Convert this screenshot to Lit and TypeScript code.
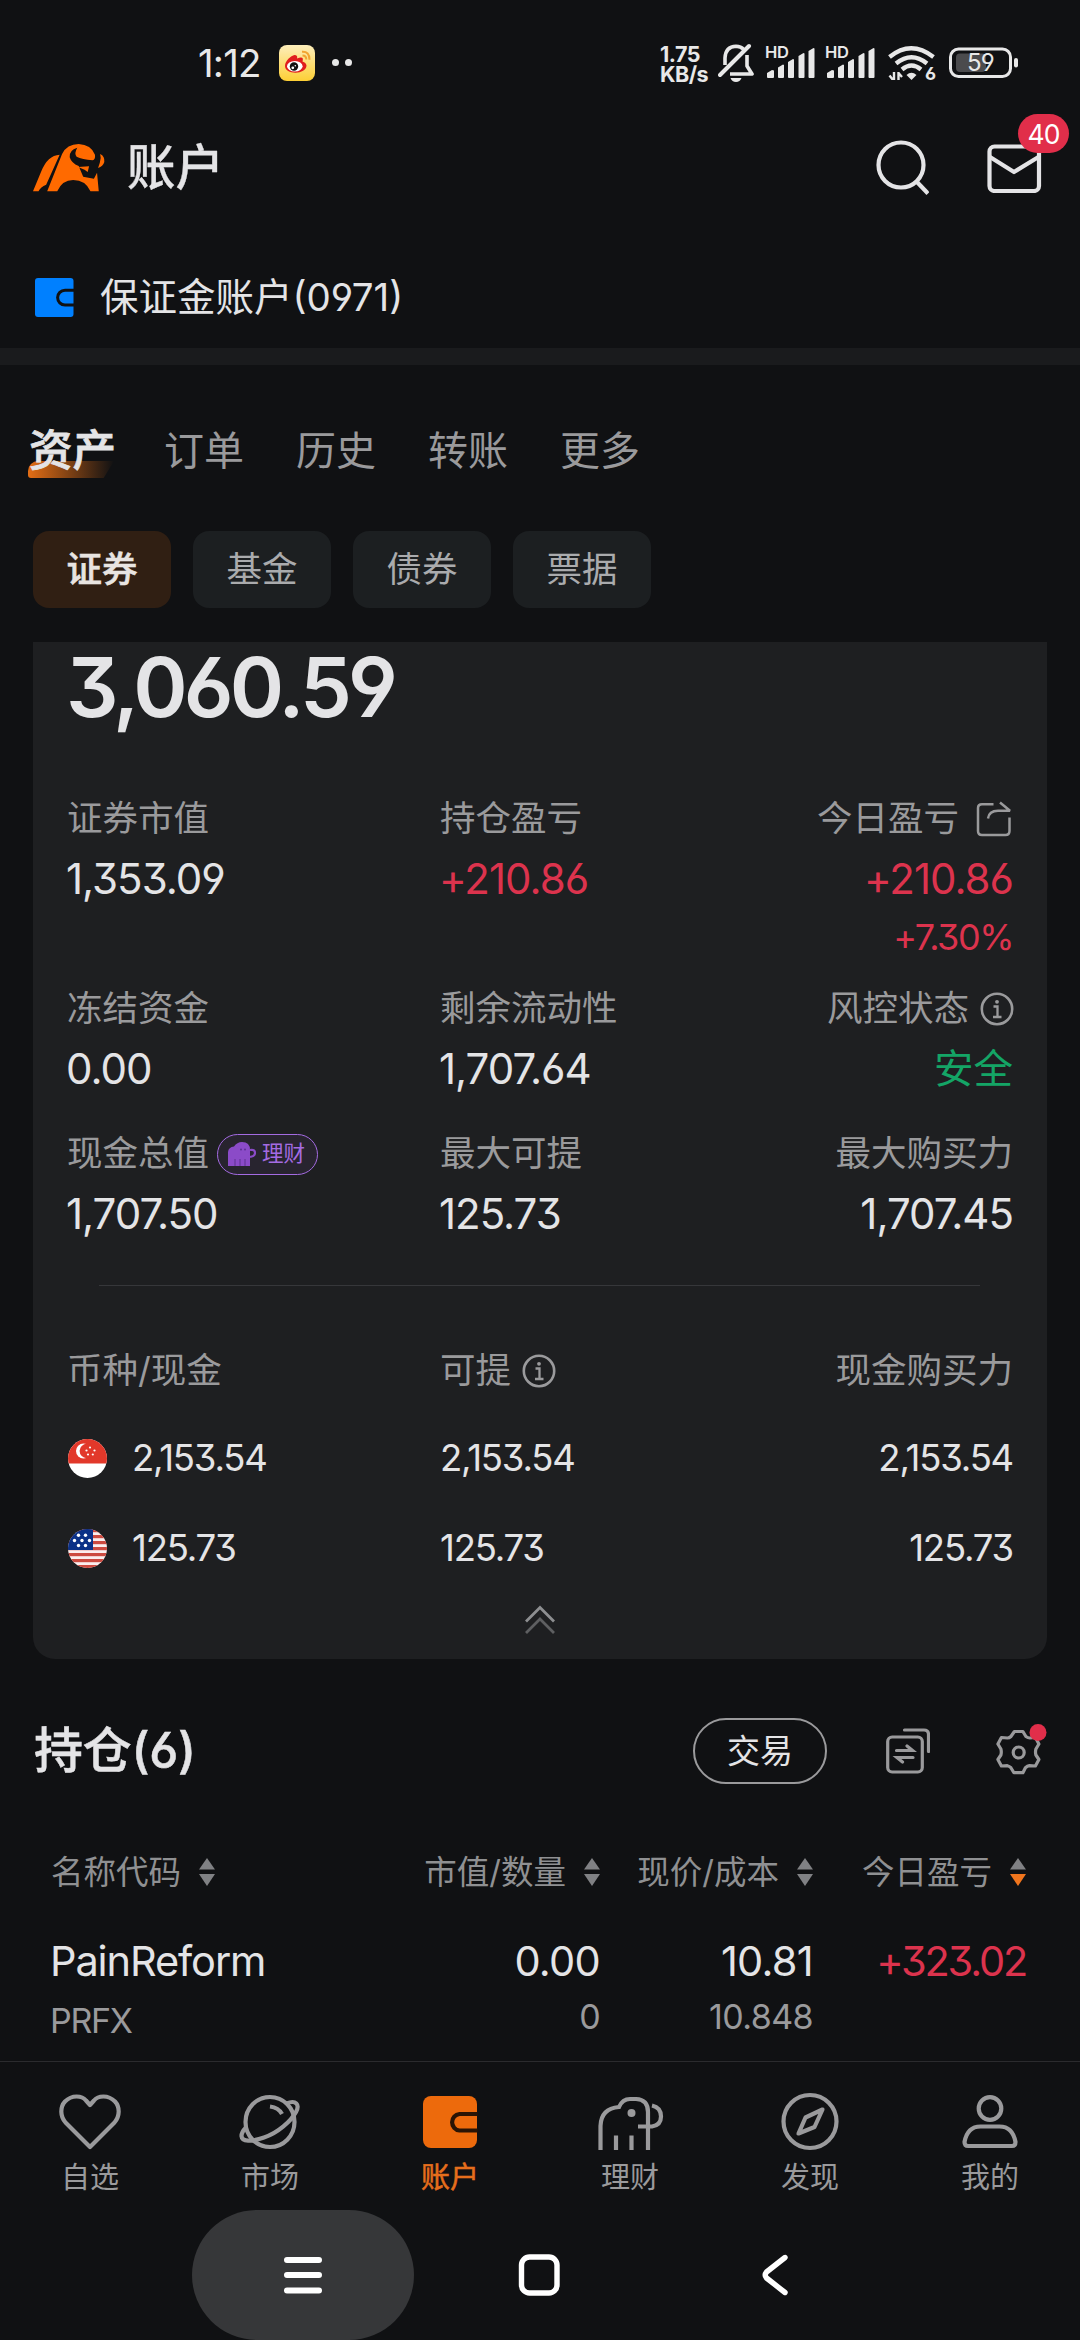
import { LitElement, html, css, svg } from "lit";
import { customElement, property } from "lit/decorators.js";
import { classMap } from "lit/directives/class-map.js";

const infoIcon = html`<svg class="info" viewBox="0 0 34 34" width="34" height="34" fill="none" stroke="#9a9a9c" stroke-width="2.6">
  <circle cx="17" cy="17" r="15.2" /><path d="M13.5 14.5h4v10M13 25h8.5" stroke-width="2.3" /><circle cx="17" cy="9.8" r="1.9" fill="#9a9a9c" stroke="none" />
</svg>`;

@customElement("sort-arrows")
export class SortArrows extends LitElement {
  @property({ type: Boolean }) down = false;
  static styles = css`
    :host { display: block; width: 16px; height: 28px; }
    svg { display: block; }
  `;
  render() {
    return html`<svg viewBox="0 0 16 28" width="16" height="28">
      <path d="M8 0l8 11.5H0z" fill="#808184" /><path d="M8 28L0 16h16z" fill=${this.down ? "#f0751d" : "#808184"} />
    </svg>`;
  }
}

@customElement("status-bar")
export class StatusBar extends LitElement {
  static styles = css`
    :host { display: flex; height: 90px; padding: 35px 62px 0 199px; box-sizing: border-box; align-items: flex-start; color: #e8e8e8; }
    .row { display: flex; flex: 1; height: 55px; align-items: center; }
    .time { font-size: 38.5px; line-height: 40px; letter-spacing: -0.8px; width: 80px; white-space: nowrap; margin-left: -1px; margin-right: 1px; }
    .dots { margin-left: 17px; display: flex; gap: 6px; }
    .dots i { width: 7px; height: 7px; border-radius: 50%; background: #e8e8e8; }
    .space { flex: 1; }
    .speed { width: 58px; display: flex; flex-direction: column; font-size: 21.5px; line-height: 20px; font-weight: 700; letter-spacing: -0.5px; margin-top: 2px; }
    .bell { margin-right: 11px; }
    .sig { width: 50px; height: 38px; margin-right: 10px; display: grid; }
    .sig > * { grid-area: 1 / 1; }
    .hd { font-size: 16.5px; line-height: 17px; font-weight: 600; margin-top: 0; letter-spacing: -0.4px; }
    .wifi { display: grid; width: 50px; margin-left: 3px; }
    .wifi > * { grid-area: 1 / 1; }
    .six { font-size: 18px; font-weight: 700; line-height: 18px; align-self: end; justify-self: end; margin-right: 2px; margin-bottom: -3px; }
    .bat { display: grid; width: 69px; height: 31px; margin-left: 11px; }
    .bat > * { grid-area: 1 / 1; }
    .pct { font-size: 24px; line-height: 31px; width: 63px; text-align: center; letter-spacing: -0.8px; }
    svg { display: block; flex: none; }
  `;
  private signal() {
    return html`<div class="sig">
      <span class="hd">HD</span>
      <svg viewBox="0 0 50 38" width="50" height="38" fill="#e8e8e8">
        <path d="M2 29l5-3 2 .5V33q0 1-1 1H3q-1 0-1-1zM13 23.500l5-3 1 .5V33q0 1-1 1h-4q-1 0-1-1zM23 18l5-3 1 .5V33q0 1-1 1h-4q-1 0-1-1zM33.500 12l5-3 1 .5V33q0 1-1 1h-4q-1 0-1-1zM43.500 7l5-3 1 .5V33q0 1-1 1h-4q-1 0-1-1z" />
      </svg>
    </div>`;
  }
  render() {
    return html`<div class="row">
      <span class="time">1:12</span>
      <svg viewBox="0 0 36 36" width="36" height="36">
        <defs><linearGradient id="wb" x1="0" y1="0" x2="0" y2="1"><stop offset="0" stop-color="#fdeebb" /><stop offset="1" stop-color="#fdcf35" /></linearGradient></defs>
        <rect width="36" height="36" rx="8" fill="url(#wb)" />
        <path d="M23 6.800q7.500-.5 7.500 8M23.500 10.500q3.800 0 3.800 4" fill="none" stroke="#f2a531" stroke-width="2" />
        <path d="M6 21C6 16 12 10.500 15.500 10q3.500 0 2.500 3.500Q23 11.500 23.800 13.500 24 15 23.500 16.500 27 17.500 27.500 20.500C27.500 25 22 27.700 16.500 27.700S6 25.500 6 21z" fill="#e01d1d" />
        <ellipse cx="15.800" cy="21.200" rx="7.800" ry="5.300" fill="#fff" />
        <circle cx="15" cy="21.500" r="4.200" fill="#111" /><circle cx="13.800" cy="22.800" r="1.400" fill="#fff" /><circle cx="16.300" cy="20.700" r=".8" fill="#fff" />
      </svg>
      <span class="dots"><i></i><i></i></span>
      <span class="space"></span>
      <div class="speed"><span>1.75</span><span>KB/s</span></div>
      <svg class="bell" viewBox="0 0 36 40" width="36" height="40" fill="none" stroke="#e8e8e8" stroke-width="3.600">
        <path d="M7 22V15Q7.500 3.500 18 3.200q5 .2 7.500 3" /><path d="M29 12v11l5 8H12" stroke-linejoin="round" /><path d="M2 32L31 3" stroke-linecap="round" stroke-width="4" /><path d="M12.500 35h11q-1.500 4-5.500 4t-5.500-4z" fill="#e8e8e8" stroke="none" />
      </svg>
      ${this.signal()}${this.signal()}
      <div class="wifi">
        <svg viewBox="0 0 50 34" width="50" height="34" fill="none" stroke="#e8e8e8" stroke-width="4.300">
          <path d="M1.500 11Q23 -6.500 45.500 11" /><path d="M8 17.500Q23.500 5 39 17.500" /><path d="M14 23.500q9.500-8 19 0" />
          <path d="M18.500 29q5-4.500 10 0l-5 5z" fill="#e8e8e8" stroke="none" />
          <path d="M6 26v9M1.500 29.500L5 34M10.500 35v-9M10.500 27l3.500 4" stroke-width="2.400" />
        </svg>
        <span class="six">6</span>
      </div>
      <div class="bat">
        <svg viewBox="0 0 69 31" width="69" height="31"><rect x="1.500" y="2" width="60" height="27.500" rx="8" fill="none" stroke="#e8e8e8" stroke-width="3" /><rect x="7" y="6.500" width="30" height="18.500" rx="4" fill="#4b4b4d" /><rect x="65" y="11" width="4" height="9.500" rx="2" fill="#e8e8e8" /></svg>
        <span class="pct">59</span>
      </div>
    </div>`;
  }
}

@customElement("app-header")
export class AppHeader extends LitElement {
  static styles = css`
    :host { display: block; color: #e4e4e6; }
    .top { display: flex; align-items: center; height: 156px; padding: 0 38px 0 33px; }
    h1 { margin: 0 0 0 22px; font-size: 48.5px; font-weight: 500; line-height: 60px; flex: 1; -webkit-text-stroke: 0.3px; }
    .search { margin-right: 57px; }
    .mail { position: relative; }
    .badge { position: absolute; left: 32px; top: -29px; width: 51px; height: 39px; border-radius: 20px; background: #e12e4a; color: #fff; font-size: 26.5px; line-height: 40px; text-align: center; letter-spacing: -1px; }
    .account { display: flex; align-items: center; height: 102px; padding-left: 35px; gap: 26px; font-size: 38.5px; border-bottom: 17px solid #1a1b1d; }
    .account b { font-weight: 400; white-space: nowrap; line-height: 50px; }
    svg { display: block; }
  `;
  render() {
    return html`
      <div class="top">
        <svg viewBox="96 368 208 144" width="72" height="48" preserveAspectRatio="none" fill="#ff6a00">
          <path d="M96 510L120 450Q138 402 173 400L134 490Q118 496 112 510z" />
          <path d="M137 510L180 398Q194 368 228 368Q264 370 275 400Q277 414 268 417Q238 414 222 406Q214 396 224 379Q200 386 202 408Q207 426 228 434L241 466L272 472L281 454L286 510H262Q248 476 212 476Q180 476 166 510z" />
          <path d="M226 437L258 435L254 452L245 445z" />
          <path d="M290 398Q304 405 302 422Q298 436 284 440L289 424Q294 412 290 398z" />
        </svg>
        <h1>账户</h1>
        <svg class="search" viewBox="0 0 54 56" width="54" height="56" fill="none" stroke="#e4e4e6" stroke-width="4.200"><circle cx="26" cy="25" r="22.500" /><path d="M41.500 41.500L53 53.500" /></svg>
        <div class="mail">
          <svg viewBox="0 0 56 50" width="56" height="50" fill="none" stroke="#e4e4e6" stroke-width="4.200"><rect x="3.500" y="3.500" width="49.500" height="44.500" rx="5" /><path d="M4 14l24 15L52.500 14" stroke-linejoin="round" /></svg>
          <span class="badge">40</span>
        </div>
      </div>
      <div class="account">
        <svg viewBox="0 0 39 39" width="39" height="39"><rect width="38.500" height="39" rx="3" fill="#0080ff" /><path d="M39 12.200H30a7.300 7.300 0 0 0 0 14.800h9" fill="none" stroke="#101113" stroke-width="3" /></svg>
        <b>保证金账户(0971)</b>
      </div>`;
  }
}

@customElement("asset-tabs")
export class AssetTabs extends LitElement {
  static styles = css`
    :host { display: block; }
    .tabs { display: flex; height: 172px; padding-left: 28px; align-items: center; color: #9a9a9c; }
    .tab { font-size: 40px; line-height: 50px; width: 132px; }
    .tab.on { width: 136px; font-size: 43.500px; font-weight: 500; color: #e4e4e6; position: relative; margin-top: -2px; }
    .tab.on::before { content: ""; position: absolute; left: 0; top: 36px; width: 86px; height: 17px; border-radius: 10px 0 0 3px; background: linear-gradient(90deg, #e46e15, rgba(228, 110, 21, 0)); clip-path: polygon(0 0, 100% 0, 88% 100%, 0 100%); }
    .tab span { position: relative; }
    .tab.on span { left: 1px; -webkit-text-stroke: 0.8px; }
    .chips { display: flex; gap: 22px; padding: 0 33px 34px; margin-top: -6px; }
    .chip { width: 138px; height: 77px; border-radius: 16px; background: #1c1f21; color: #aaabad; font-size: 35.500px; line-height: 77px; text-align: center; }
    .chip.on { background: #301f13; color: #e8e4e1; font-weight: 500; -webkit-text-stroke: 0.6px; }
  `;
  render() {
    return html`
      <div class="tabs">${["资产", "订单", "历史", "转账", "更多"].map((t, i) => html`<div class=${classMap({ tab: true, on: i === 0 })}><span>${t}</span></div>`)}</div>
      <div class="chips">${["证券", "基金", "债券", "票据"].map((t, i) => html`<div class=${classMap({ chip: true, on: i === 0 })}>${t}</div>`)}</div>`;
  }
}

@customElement("asset-card")
export class AssetCard extends LitElement {
  static styles = css`
    :host { display: block; margin: 0 33px; height: 1017px; background: #1e1f21; border-radius: 0 0 22px 22px; padding: 0 34px; box-sizing: border-box; color: #e4e4e6; }
    .total { height: 147px; font-size: 82.500px; line-height: 91px; font-weight: 600; letter-spacing: -3.800px; margin-left: -1px; }
    .grid { display: grid; grid-template-columns: 373px 1fr 1fr; }
    .r1 { height: 190px; }
    .r2 { height: 145px; }
    .r3 { height: 126px; }
    .cell { display: flex; flex-direction: column; align-items: flex-start; white-space: nowrap; }
    .cell.end { align-items: flex-end; }
    .label { height: 60px; display: flex; align-items: center; font-size: 35.500px; color: #9a9a9c; }
    .value { height: 60px; line-height: 60px; font-size: 42px; letter-spacing: -1px; margin-left: -1px; }
    .sub { height: 56px; line-height: 56px; font-size: 36px; letter-spacing: -1.500px; }
    .up { color: #dc334d; }
    .safe { color: #14a566; font-size: 39.500px; letter-spacing: 0; line-height: 60px; }
    .info { margin: 0 -1px 0 11px; }
    .share { margin: 0 1px 0 17px; }
    .pill { display: flex; align-items: center; height: 41px; width: 101px; border: 1.500px solid #a46be2; border-radius: 21px; background: #28242f; box-sizing: border-box; color: #a46be2; font-size: 21.500px; margin-left: 8px; padding-left: 10px; gap: 6px; }
    hr { border: 0; height: 1px; background: #36373a; margin: 35px 33px 0 32px; }
    .cash { height: 90px; font-size: 36.500px; letter-spacing: -1.200px; align-items: center; }
    .cash.head { margin-top: 42px; height: 86px; letter-spacing: 0; color: #9a9a9c; font-size: 35.500px; }
    .cash div { display: flex; align-items: center; }
    .cash div:last-child { justify-content: flex-end; }
    .flag { margin: 0 25px 0 1px; }
    .fold { margin: 11px auto 0; }
    svg { display: block; flex: none; }
  `;
  private cell(label: unknown, value: string, opts: { end?: boolean; cls?: string; sub?: string } = {}) {
    return html`<div class=${classMap({ cell: true, end: !!opts.end })}>
      <div class="label">${label}</div>
      <div class="value ${opts.cls ?? ""}">${value}</div>
      ${opts.sub ? html`<div class="sub ${opts.cls ?? ""}">${opts.sub}</div>` : ""}
    </div>`;
  }
  render() {
    const share = html`<svg class="share" viewBox="0 0 36 36" width="36" height="36" fill="none" stroke="#9a9a9c" stroke-width="2.500"><path d="M17.500 3.200H6Q2 3.200 2 7V30Q2 34 6 34H29.500Q33.500 34 33.500 30V16.500" /><path d="M12 17.500Q13 9.800 22 9.800H34L24 1.500" stroke-linejoin="bevel" /></svg>`;
    const pill = html`<span class="pill"><svg viewBox="0 0 28 24" width="28" height="24" fill="#8b4bc8"><path d="M0 24V10Q.5 5 6 4.500 9 0 14 0q8 0 8 8v16z" /><path d="M22 8q5-1 5 3 0 4-7 4" fill="none" stroke="#8b4bc8" stroke-width="2.200" /><circle cx="13" cy="7.500" r="1" fill="#5c3390" /><circle cx="17" cy="7.500" r="1" fill="#5c3390" /><path d="M7 24v-7M12 24v-7M17 24v-7" stroke="#5c3390" stroke-width="1" /></svg>理财</span>`;
    const star = (x: number, y: number, r: number) => svg`<circle cx=${x} cy=${y} r=${r} fill="#fff" />`;
    const sg = html`<svg class="flag" viewBox="0 0 39 39" width="39" height="39"><clipPath id="c"><circle cx="19.500" cy="19.500" r="19.500" /></clipPath><g clip-path="url(#c)"><rect width="39" height="39" fill="#fff" /><rect width="39" height="24.500" fill="#e2382a" /><circle cx="15.500" cy="12" r="7.500" fill="#fff" /><circle cx="18.800" cy="12" r="7.200" fill="#e2382a" />${star(22, 8.500, 1.100)}${star(18.500, 11.500, 1.100)}${star(26.500, 11.500, 1.100)}${star(20, 15.500, 1.100)}${star(24.800, 15.500, 1.100)}</g></svg>`;
    const us = html`<svg class="flag" viewBox="0 0 39 39" width="39" height="39"><clipPath id="c"><circle cx="19.500" cy="19.500" r="19.500" /></clipPath><g clip-path="url(#c)"><rect width="39" height="39" fill="#fbeeee" />${[0, 6, 12, 18, 24, 30, 36].map((y) => svg`<rect y=${y} width="39" height="3.200" fill="#cc4a40" />`)}<rect width="25" height="21" fill="#0b3187" />${star(10.500, 6.300, 1.700)}${star(17.500, 6.300, 1.700)}${star(6.500, 11.500, 1.700)}${star(14, 11.500, 1.700)}${star(21.500, 11.500, 1.700)}${star(10.500, 16.500, 1.700)}${star(17.500, 16.500, 1.700)}</g></svg>`;
    return html`
      <div class="total">3,060.59</div>
      <div class="grid r1">
        ${this.cell("证券市值", "1,353.09")}
        ${this.cell("持仓盈亏", "+210.86", { cls: "up" })}
        ${this.cell(html`今日盈亏${share}`, "+210.86", { cls: "up", end: true, sub: "+7.30%" })}
      </div>
      <div class="grid r2">
        ${this.cell("冻结资金", "0.00")}
        ${this.cell("剩余流动性", "1,707.64")}
        ${this.cell(html`风控状态${infoIcon}`, "安全", { cls: "safe", end: true })}
      </div>
      <div class="grid r3">
        ${this.cell(html`现金总值${pill}`, "1,707.50")}
        ${this.cell("最大可提", "125.73")}
        ${this.cell("最大购买力", "1,707.45", { end: true })}
      </div>
      <hr />
      <div class="grid cash head"><div>币种/现金</div><div>可提${infoIcon}</div><div>现金购买力</div></div>
      <div class="grid cash"><div>${sg}2,153.54</div><div>2,153.54</div><div>2,153.54</div></div>
      <div class="grid cash"><div>${us}125.73</div><div>125.73</div><div>125.73</div></div>
      <svg class="fold" viewBox="0 0 30 30" width="30" height="30" fill="none" stroke-width="2.800"><path d="M1 16.500L15 2.500l14 14" stroke="#8d8e90" /><path d="M1 28L15 14l14 14" stroke="#5e5f61" /></svg>`;
  }
}

@customElement("holdings-list")
export class HoldingsList extends LitElement {
  static styles = css`
    :host { display: block; height: 402px; box-sizing: border-box; padding-top: 58px; color: #e4e4e6; }
    .bar { display: flex; align-items: center; height: 68px; padding: 0 33px 0 34px; }
    h2 { flex: 1; margin: 0; font-size: 49px; font-weight: 500; letter-spacing: -0.300px; line-height: 60px; -webkit-text-stroke: 0.500px; }
    .trade { width: 134px; height: 66px; box-sizing: border-box; border: 2px solid #9a9a9c; border-radius: 33px; text-align: center; font-size: 33px; line-height: 62px; margin-right: 59px; }
    .copy { margin-right: 66px; }
    .head { display: flex; height: 100px; margin-top: 37px; align-items: center; padding: 0 54px 0 51px; font-size: 32.500px; color: #8f9092; }
    .h { display: flex; align-items: center; gap: 18px; justify-content: flex-end; white-space: nowrap; }
    .h:first-child, .c:first-child { flex: 1; justify-content: flex-start; text-align: left; }
    .w { width: 213px; }
    .row { display: flex; padding: 0 54px 0 51px; margin-top: 9px; }
    .c { text-align: right; font-size: 41.500px; line-height: 60px; letter-spacing: -0.700px; }
    .c:first-child { letter-spacing: -1.100px; margin-left: -1px; }
    .c small { display: block; font-size: 34px; line-height: 52px; color: #9a9a9c; letter-spacing: -0.600px; }
    .c:first-child small { margin-top: 4px; letter-spacing: -1.300px; }
    .c.up { color: #dc334d; letter-spacing: -2.200px; }
    svg { display: block; }
  `;
  render() {
    return html`
      <div class="bar">
        <h2>持仓(6)</h2>
        <div class="trade">交易</div>
        <svg class="copy" viewBox="0 0 44 46" width="44" height="46" fill="none" stroke="#9a9a9c" stroke-width="3.200" stroke-linecap="round"><rect x="1.700" y="9" width="34.600" height="35" rx="4.500" /><path d="M18.500 2H38q4.500 0 4.500 4.500V23.500M10.500 22.500h16l-5.500-4.500M27 29.500H11l5.500 4.500" /></svg>
        <svg viewBox="0 0 51 60" width="51" height="60" fill="none" stroke="#9a9a9c" stroke-width="3.200"><path d="M19 10h8.500l3 5q2 1.500 4 1.500l5.500-.5 3.500 6.500-3 5q-.8 3 0 6l3 4.500-3.500 6.500-6-.3q-2 .3-4 2l-2.500 5h-9l-3-5q-1.500-1.500-3.500-2l-6 .3-3.500-6.500 3-4.500q.8-3 0-6l-3-5 3.500-6.500 6 .5q2 0 3.500-1.500z" stroke-linejoin="round" transform="translate(-.6 .5)" /><circle cx="22.700" cy="31.500" r="5.500" /><circle cx="42" cy="11.500" r="8.500" fill="#e12e4a" stroke="none" /></svg>
      </div>
      <div class="head">
        <div class="h">名称代码<sort-arrows></sort-arrows></div>
        <div class="h">市值/数量<sort-arrows></sort-arrows></div>
        <div class="h w">现价/成本<sort-arrows></sort-arrows></div>
        <div class="h w">今日盈亏<sort-arrows down></sort-arrows></div>
      </div>
      <div class="row">
        <div class="c">PainReform<small>PRFX</small></div>
        <div class="c">0.00<small>0</small></div>
        <div class="c w">10.81<small>10.848</small></div>
        <div class="c w up">+323.02</div>
      </div>`;
  }
}

@customElement("tab-bar")
export class TabBar extends LitElement {
  static styles = css`
    :host { display: block; }
    .tabs { display: grid; grid-template-columns: repeat(6, 1fr); height: 149px; box-sizing: border-box; border-top: 1px solid #2b2b2e; padding-top: 26px; }
    .t { display: flex; flex-direction: column; align-items: center; color: #9a9a9c; font-size: 29px; line-height: 44px; gap: 2px; }
    .t.on { color: #e66e1c; -webkit-text-stroke: 0.500px; }
    .nav { display: flex; height: 130px; align-items: center; }
    .menu { width: 222px; height: 130px; border-radius: 65px; background: #363739; margin-left: 192px; display: flex; align-items: center; justify-content: center; }
    .home { margin-left: 104px; }
    .back { margin-left: 201px; }
    svg { display: block; }
  `;
  render() {
    const tabs = [
      { name: "自选", icon: svg`<path d="M35 62L10.500 37.500C5 31 5 22 10 16.500 17 9.500 27 10.500 31 15.500L35 20 39 15.500C43 10.500 53 9.500 60 16.500 65 22 65 31 59.500 37.500z" transform="translate(0 -3)" stroke-linejoin="round"/>` },
      { name: "市场", icon: svg`<ellipse cx="35" cy="34" rx="24.500" ry="25"/><path d="M51.500 15.500C61 11.500 65 16.500 61 24 56 33 43 45 29 49.500 16 54 7 54 6.500 48 6.500 45 8.500 42 11 39.500M35 18.500q8.500 1 12 7.500"/>` },
      { name: "账户", icon: svg`<rect x="8" y="8" width="54" height="52" rx="8" fill="#ed6a0c" stroke="none"/><path d="M62.500 26H44.500a8.300 8.300 0 0 0 0 16.500h18" stroke="#2a1405"/>` },
      { name: "理财", icon: svg`<path d="M5.500 62V38Q6 20.500 24 19 27.500 11 35 11H41Q53 11.500 53 24V62M21 47.500V62M36.500 47.500V62M43 38.500H57Q66 37 66 28.500 66 19.500 57 17.500"/><circle cx="36.500" cy="25" r="4" fill="#9a9a9c" stroke="none"/>` },
      { name: "发现", icon: svg`<circle cx="35" cy="33.500" r="26.500"/><path d="M47.500 21.500L30.500 29.500 23.500 45.500 39.500 39z" stroke-linejoin="round"/>` },
      { name: "我的", icon: svg`<circle cx="35" cy="20.500" r="11.300"/><path d="M25.500 38.500H44.500C55 38.500 59 46 60.500 54Q60.500 58 57 58H13Q9.500 58 9.500 54C11 46 15 38.500 25.500 38.500z"/>` },
    ];
    return html`
      <div class="tabs">${tabs.map((t, i) => html`<div class=${classMap({ t: true, on: i === 2 })}>
        <svg viewBox="0 0 70 66" width="70" height="66" fill="none" stroke="#9a9a9c" stroke-width="4.200">${t.icon}</svg><span>${t.name}</span></div>`)}</div>
      <div class="nav">
        <div class="menu"><svg viewBox="0 0 40 38" width="40" height="38" stroke="#fff" stroke-width="6" stroke-linecap="round"><path d="M4 4h32M4 19h32M4 34.500h32" /></svg></div>
        <svg class="home" viewBox="0 0 42 42" width="42" height="42" fill="none" stroke="#fff" stroke-width="5.400"><rect x="3.500" y="3" width="35.500" height="36" rx="8" /></svg>
        <svg class="back" viewBox="0 0 28 42" width="28" height="42" fill="none" stroke="#fff" stroke-width="5.400" stroke-linecap="round" stroke-linejoin="round"><path d="M24 3.500L5.500 18Q3 21 5.500 24L24 38.500" /></svg>
      </div>`;
  }
}

@customElement("app-root")
export class AppRoot extends LitElement {
  static styles = css`
    :host { display: block; width: 1080px; height: 2340px; overflow: hidden; background: #101113; line-height: 1.2; font-family: Inter, "Noto Sans CJK SC", sans-serif; font-feature-settings: "cv03", "cv04", "cv09"; }
  `;
  render() {
    return html`<status-bar></status-bar><app-header></app-header><asset-tabs></asset-tabs><asset-card></asset-card><holdings-list></holdings-list><tab-bar></tab-bar>`;
  }
}
